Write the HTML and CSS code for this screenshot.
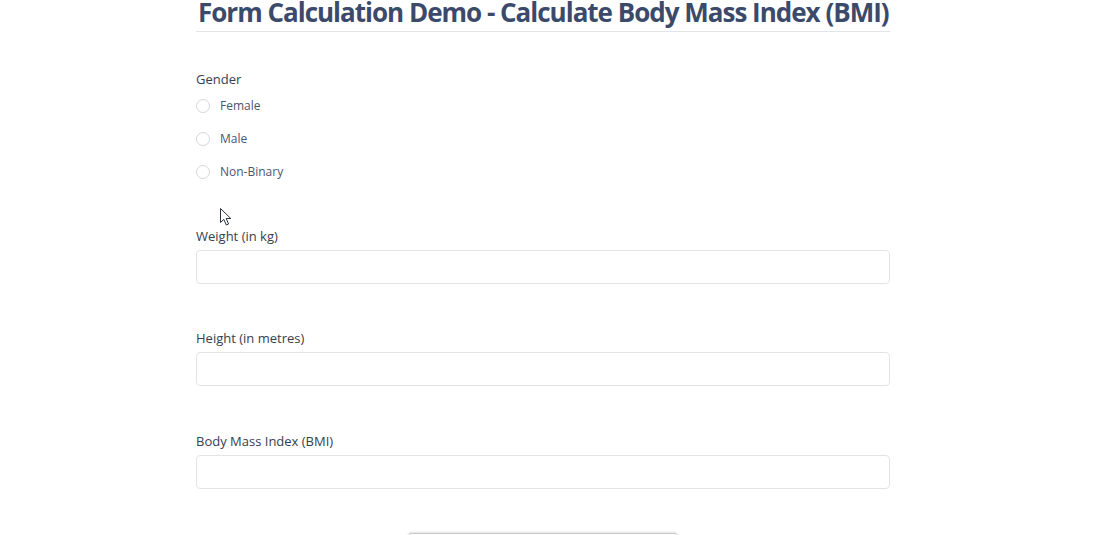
FILE: index.html
```html
<!DOCTYPE html>
<html lang="en">
<head>
<meta charset="utf-8">
<title>Form Calculation Demo</title>
<link rel="stylesheet" href="styles.css">
</head>
<body>
<main class="page">
  <h1 class="title">Form Calculation Demo - Calculate Body Mass Index (BMI)</h1>
  <form class="form">
    <fieldset class="group gender">
      <legend class="label">Gender</legend>
      <label class="radio-row"><span class="radio"></span><span class="radio-text">Female</span></label>
      <label class="radio-row"><span class="radio"></span><span class="radio-text">Male</span></label>
      <label class="radio-row"><span class="radio"></span><span class="radio-text">Non-Binary</span></label>
    </fieldset>
    <div class="group field">
      <label class="label">Weight (in kg)</label>
      <div class="input"></div>
    </div>
    <div class="group field">
      <label class="label">Height (in metres)</label>
      <div class="input"></div>
    </div>
    <div class="group field">
      <label class="label">Body Mass Index (BMI)</label>
      <div class="input"></div>
    </div>
    <div class="actions"><div class="button"></div></div>
  </form>
  <svg class="cursor" width="14" height="20" viewBox="0 0 14 20">
    <path d="M1.5 1.5 L1.5 15.5 L4.8 12.4 L7.3 18 L9.6 17 L7.2 11.5 L11.8 11.5 Z" fill="#fff" stroke="#2b3340" stroke-width="1" stroke-linejoin="round"/>
  </svg>
</main>
</body>
</html>
```
FILE: styles.css
```css
html, body {
  margin: 0;
  padding: 0;
  background: #ffffff;
}
body {
  font-family: "Open Sans", "Noto Sans", sans-serif;
  color: #3d4a5c;
  overflow: hidden;
  height: 535px;
}
.page {
  position: relative;
  width: 694px;
  margin-left: 196px;
  height: 535px;
  overflow: hidden;
}
.title {
  margin: 0;
  font-size: 26px;
  font-weight: 700;
  line-height: 24px;
  color: #3b4a6b;
  padding: 0 0 7px 2px;
  border-bottom: 1px solid #e2e4e8;
  white-space: nowrap;
  letter-spacing: -1px;
}
.form {
  display: flex;
  flex-direction: column;
}
.group {
  margin: 0;
  padding: 0;
  border: 0;
  min-width: 0;
}
.label {
  display: block;
  padding: 0;
  font-size: 13px;
  line-height: 18px;
  font-weight: 500;
  color: #35404f;
}
.gender {
  margin-top: 38px;
  display: flex;
  flex-direction: column;
}
.gender .label {
  margin-bottom: 1px;
}
.radio-row {
  display: flex;
  align-items: center;
  height: 33px;
  gap: 10px;
}
.radio {
  width: 12px;
  height: 12px;
  border: 1px solid #d4d6da;
  border-radius: 50%;
  background: #fff;
}
.radio-text {
  font-size: 12px;
  color: #4a5670;
}
.field {
  display: flex;
  flex-direction: column;
}
.gender + .field {
  margin-top: 39px;
}
.field + .field {
  margin-top: 45px;
}
.field + .field + .field {
  margin-top: 46px;
}
.field .label {
  margin-bottom: 5px;
}
.input {
  height: 32px;
  border: 1px solid #e3e4e6;
  border-radius: 4px;
  background: #fff;
}
.actions {
  display: flex;
  justify-content: center;
  margin-top: 44px;
}
.button {
  width: 270px;
  height: 36px;
  border-top: 1px solid #c8c8c8;
  border-radius: 4px;
  background: #fff;
  box-shadow: 0 -1px 2px rgba(0,0,0,0.12);
}
.cursor {
  position: absolute;
  left: 23px;
  top: 207px;
}
```
